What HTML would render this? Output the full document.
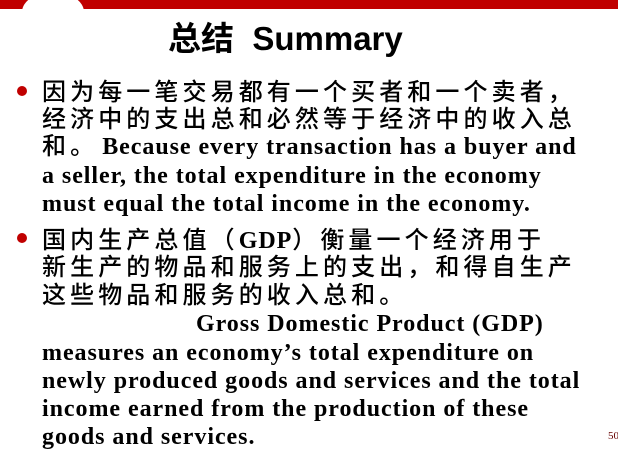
<!DOCTYPE html>
<html><head><meta charset="utf-8"><style>
html,body{margin:0;padding:0;background:#fff;width:618px;height:462px;overflow:hidden;position:relative}
.bar{position:absolute;left:0;top:0;width:618px;height:9px;background:#c00000}
.circ{position:absolute;left:22px;top:-8px;width:62px;height:40px;border-radius:50%;background:#fff}
.t{position:absolute;white-space:nowrap;line-height:1;color:#000}
.title{left:168px;top:12px;font:bold 33px "Liberation Sans","Noto Sans CJK SC",sans-serif}
.zh{font-family:"Liberation Serif","Noto Sans CJK SC",sans-serif;font-size:24px;letter-spacing:4.1px;font-weight:500}
.en{font-family:"Liberation Serif",serif;font-weight:bold;font-size:24px;letter-spacing:0.95px}
.b{position:absolute;width:10px;height:10px;border-radius:50%;background:#c00000;left:17px}
.pg{position:absolute;left:608px;top:430px;font:11px "Liberation Serif",serif;color:#600}
</style></head><body>
<div class="bar"></div><div class="circ"></div>
<div class="t title">总结&nbsp; Summary</div>
<div class="b" style="top:86px"></div>
<div class="t zh" style="left:42px;top:81px">因为每一笔交易都有一个买者和一个卖者，</div>
<div class="t zh" style="left:42px;top:108px">经济中的支出总和必然等于经济中的收入总</div>
<div class="t" style="left:42px;top:135px"><span class="zh">和。</span> <span class="en">Because every transaction has a buyer and</span></div>
<div class="t en" style="left:42px;top:164px">a seller, the total expenditure in the economy</div>
<div class="t en" style="left:42px;top:192px">must equal the total income in the economy.</div>
<div class="b" style="top:233px"></div>
<div class="t" style="left:42px;top:229px"><span class="zh">国内生产总值（</span><span class="en">GDP</span><span class="zh">）衡量一个经济用于</span></div>
<div class="t zh" style="left:42px;top:256px">新生产的物品和服务上的支出，和得自生产</div>
<div class="t zh" style="left:42px;top:284px">这些物品和服务的收入总和。</div>
<div class="t en" style="left:196px;top:312px">Gross Domestic Product (GDP)</div>
<div class="t en" style="left:42px;top:341px">measures an economy’s total expenditure on</div>
<div class="t en" style="left:42px;top:369px">newly produced goods and services and the total</div>
<div class="t en" style="left:42px;top:397px">income earned from the production of these</div>
<div class="t en" style="left:42px;top:425px">goods and services.</div>
<div class="pg">50</div>
</body></html>
